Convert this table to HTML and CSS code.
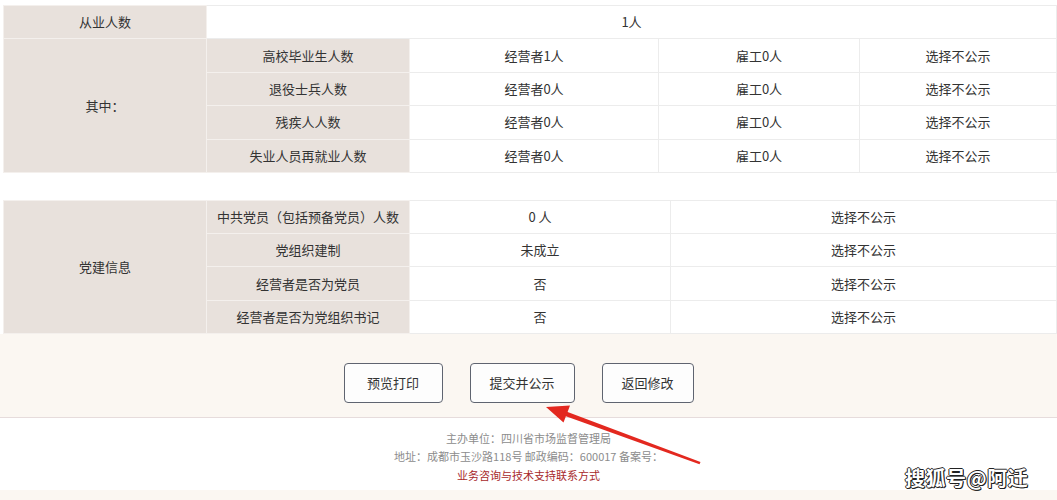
FILE: index.html
```html
<!DOCTYPE html>
<html lang="zh">
<head>
<meta charset="utf-8">
<title>从业人数</title>
<link rel="stylesheet" href="styles.css">
</head>
<body>
<div class="page">
  <div class="tables">
    <table class="info">
      <colgroup>
        <col class="c-label"><col class="c-sub"><col class="c-a"><col class="c-b"><col>
      </colgroup>
      <tr>
        <td class="lbl">从业人数</td>
        <td colspan="4">1人</td>
      </tr>
      <tr>
        <td class="lbl" rowspan="4">其中：</td>
        <td class="lbl">高校毕业生人数</td>
        <td>经营者1人</td><td>雇工0人</td><td>选择不公示</td>
      </tr>
      <tr>
        <td class="lbl">退役士兵人数</td>
        <td>经营者0人</td><td>雇工0人</td><td>选择不公示</td>
      </tr>
      <tr>
        <td class="lbl">残疾人人数</td>
        <td>经营者0人</td><td>雇工0人</td><td>选择不公示</td>
      </tr>
      <tr>
        <td class="lbl">失业人员再就业人数</td>
        <td>经营者0人</td><td>雇工0人</td><td>选择不公示</td>
      </tr>
    </table>

    <table class="info party">
      <colgroup>
        <col class="c-label"><col class="c-sub"><col class="c-p"><col>
      </colgroup>
      <tr>
        <td class="lbl" rowspan="4">党建信息</td>
        <td class="lbl">中共党员（包括预备党员）人数</td>
        <td>0 人</td><td>选择不公示</td>
      </tr>
      <tr>
        <td class="lbl">党组织建制</td>
        <td>未成立</td><td>选择不公示</td>
      </tr>
      <tr>
        <td class="lbl">经营者是否为党员</td>
        <td>否</td><td>选择不公示</td>
      </tr>
      <tr>
        <td class="lbl">经营者是否为党组织书记</td>
        <td>否</td><td>选择不公示</td>
      </tr>
    </table>
  </div>

  <div class="actions">
    <button class="btn b1" type="button">预览打印</button>
    <button class="btn b2" type="button">提交并公示</button>
    <button class="btn b3" type="button">返回修改</button>
  </div>

  <footer class="footer">
    <p>主办单位：四川省市场监督管理局</p>
    <p>地址：成都市玉沙路118号 邮政编码：600017 备案号：</p>
    <p class="red">业务咨询与技术支持联系方式</p>
  </footer>
  <div class="bottom"></div>

  <svg class="arrow" width="1057" height="500" viewBox="0 0 1057 500">
    <polygon points="546,407 570,405.5 567.6,412 700.5,462 699.5,464.2 565.9,416.2 563.5,422.5" fill="#e3281f"/>
  </svg>

  <div class="watermark">搜狐号@阿迁</div>
</div>
</body>
</html>
```

FILE: styles.css
```css
html, body {
  margin: 0;
  padding: 0;
}
body {
  background: #fbf7f2;
  font-family: "Noto Sans CJK SC", "Noto Sans", sans-serif;
  color: #333;
  font-size: 13px;
}
.page {
  position: relative;
  width: 1057px;
  height: 500px;
  overflow: hidden;
}
.tables {
  background: #fff;
  padding: 5px 0 0 3px;
}
.info {
  width: 1054px;
  border-collapse: collapse;
  table-layout: fixed;
}
.info td {
  height: 32.4px;
  padding: 0;
  text-align: center;
  vertical-align: middle;
  border: 1px solid #ececec;
  background: #fff;
  line-height: 16px;
}
.party td {
  height: 32.25px;
}
.info td.lbl {
  background: #e8e1dc;
  border-color: #f4f0ed;
}
.c-label { width: 203px; }
.c-sub { width: 203px; }
.c-a { width: 249px; }
.c-b { width: 201px; }
.c-p { width: 261px; }
.party {
  margin-top: 27px;
}
.actions {
  height: 84px;
  box-sizing: border-box;
  padding: 29px 20px 0 0;
  display: flex;
  justify-content: center;
  align-items: flex-start;
  gap: 27px;
  border-bottom: 1px solid #e6dcdc;
}
.btn {
  height: 40px;
  border: 1px solid #5f6470;
  border-radius: 4px;
  background: #fdfdfd;
  font-family: "Noto Sans CJK SC", "Noto Sans", sans-serif;
  font-size: 13px;
  color: #333;
  padding: 0;
}
.b1 { width: 99px; }
.b2 { width: 105px; }
.b3 { width: 92px; }
.footer {
  background: #fff;
  height: 72px;
  box-sizing: border-box;
  padding-top: 11px;
  text-align: center;
  font-size: 11px;
  color: #8c8c8c;
}
.footer p {
  margin: 0;
  line-height: 18.5px;
}
.footer .red {
  color: #a8282b;
}
.bottom {
  height: 10px;
}
.arrow {
  position: absolute;
  left: 0;
  top: 0;
  pointer-events: none;
}
.watermark {
  position: absolute;
  left: 905px;
  top: 463px;
  font-family: "Noto Sans CJK SC", sans-serif;
  font-size: 20px;
  font-weight: 700;
  color: #fff;
  letter-spacing: 0.5px;
  text-shadow: -1px 0 #222, 1px 0 #222, 0 -1px #222, 0 1px #222, 1px 1px #222;
}
```
